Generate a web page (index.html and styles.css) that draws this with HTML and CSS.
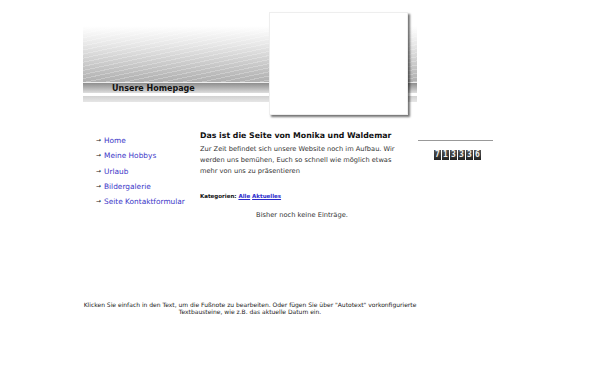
FILE: index.html
```html
<!DOCTYPE html>
<html lang="de">
<head>
    <meta charset="UTF-8">
    <title>Unsere Homepage</title>
    <link rel="stylesheet" href="styles.css">
</head>
<body>
    <div class="page">
        <div class="header">
            <div class="header-sky"></div>
            <div class="header-bar">
                <span class="site-title">Unsere Homepage</span>
            </div>
            <div class="header-stripe"></div>
            <!-- Foto-Platzhalter -->
            <div class="photo"></div>
        </div>

        <div class="main">
            <ul class="nav">
                <li><a href="#">Home</a></li>
                <li><a href="#">Meine Hobbys</a></li>
                <li><a href="#">Urlaub</a></li>
                <li><a href="#">Bildergalerie</a></li>
                <li><a href="#">Seite Kontaktformular</a></li>
            </ul>

            <div class="content">
                <h1>Das ist die Seite von Monika und Waldemar</h1>
                <p>Zur Zeit befindet sich unsere Website noch im Aufbau. Wir werden uns bemühen, Euch so schnell wie möglich etwas mehr von uns zu präsentieren</p>
                <div class="categories">Kategorien: <a href="#">Alle</a> <a href="#">Aktuelles</a></div>
                <div class="empty">Bisher noch keine Einträge.</div>
            </div>

            <div class="sidebar">
                <hr class="rule">
                <div class="counter">
                    <span>7</span><span>1</span><span>3</span><span>3</span><span>3</span><span>6</span>
                </div>
            </div>
        </div>

        <div class="footer">
            Klicken Sie einfach in den Text, um die Fußnote zu bearbeiten. Oder fügen Sie über "Autotext" vorkonfigurierte Textbausteine, wie z.B. das aktuelle Datum ein.
        </div>
    </div>
</body>
</html>
```

FILE: styles.css
```css
body {
    margin: 0;
    background: #fff;
    font-family: "DejaVu Sans", Verdana, sans-serif;
    color: #222;
}

.page {
    width: 420px;
    margin-left: 83px;
}

.header {
    position: relative;
    width: 334px;
    height: 115px;
    display: flex;
    flex-direction: column;
    justify-content: flex-end;
    padding-bottom: 13px;
    box-sizing: border-box;
}

.header-sky {
    height: 56px;
    background:
        repeating-linear-gradient(168deg, rgba(255,255,255,0) 0 3px, rgba(255,255,255,0.25) 3px 4px),
        linear-gradient(to bottom, #fff 0%, #e6e6e6 35%, #c4c4c4 75%, #b0b0b0 100%);
    border-bottom: 1px solid #eee;
}

.header-bar {
    height: 10px;
    background: linear-gradient(to bottom, #8e8e8e, #bdbdbd 60%, #dedede);
    display: flex;
    align-items: center;
    padding-left: 29px;
}

.site-title {
    font-size: 8px;
    font-weight: bold;
    color: #111;
    line-height: 10px;
    padding-top: 2px;
}

.header-stripe {
    height: 6px;
    margin-top: 3px;
    background: linear-gradient(to bottom, #d2d2d2, #e6e6e6);
}

.photo {
    position: absolute;
    left: 186px;
    top: 12px;
    width: 137px;
    height: 101px;
    background: #fff;
    border: 1px solid #eee;
    box-shadow: 2px 2px 2px rgba(0, 0, 0, 0.55);
}

.main {
    display: grid;
    grid-template-columns: 117px 218px 85px;
    margin-top: 15px;
}

.nav {
    list-style: none;
    margin: 0;
    padding: 3px 0 0 13px;
}

.nav li {
    font-size: 7.4px;
    line-height: 15.25px;
    padding-left: 8px;
    position: relative;
}

.nav li::before {
    content: "\2192";
    position: absolute;
    left: 0;
    top: -1px;
    font-size: 6px;
    color: #222;
}

.nav a {
    color: #3b36c8;
    text-decoration: none;
}

.content {
    width: 210px;
    padding-top: 1px;
}

.content h1 {
    font-size: 7.8px;
    font-weight: bold;
    margin: 0 0 4px;
    color: #111;
}

.content p {
    font-size: 6.65px;
    line-height: 11px;
    margin: 0;
    color: #333;
}

.categories {
    font-size: 5.5px;
    font-weight: bold;
    margin-top: 16px;
    color: #111;
}

.categories a {
    color: #2a2acc;
}

.empty {
    width: 204px;
    font-size: 6.7px;
    text-align: center;
    margin-top: 12px;
    color: #333;
}

.sidebar {
    padding-top: 10px;
}

.rule {
    width: 75px;
    margin: 0 0 9px;
    border: 0;
    border-top: 1px solid #999;
}

.counter {
    display: flex;
    margin-left: 16px;
    gap: 1px;
}

.counter span {
    width: 7px;
    height: 10px;
    background: linear-gradient(to bottom, #555, #222);
    color: #eee;
    font-size: 8px;
    font-weight: bold;
    line-height: 10px;
    text-align: center;
    font-family: "DejaVu Sans Mono", monospace;
}

.footer {
    width: 334px;
    margin-top: 82px;
    font-size: 6px;
    line-height: 7px;
    text-align: center;
    color: #222;
}
```
